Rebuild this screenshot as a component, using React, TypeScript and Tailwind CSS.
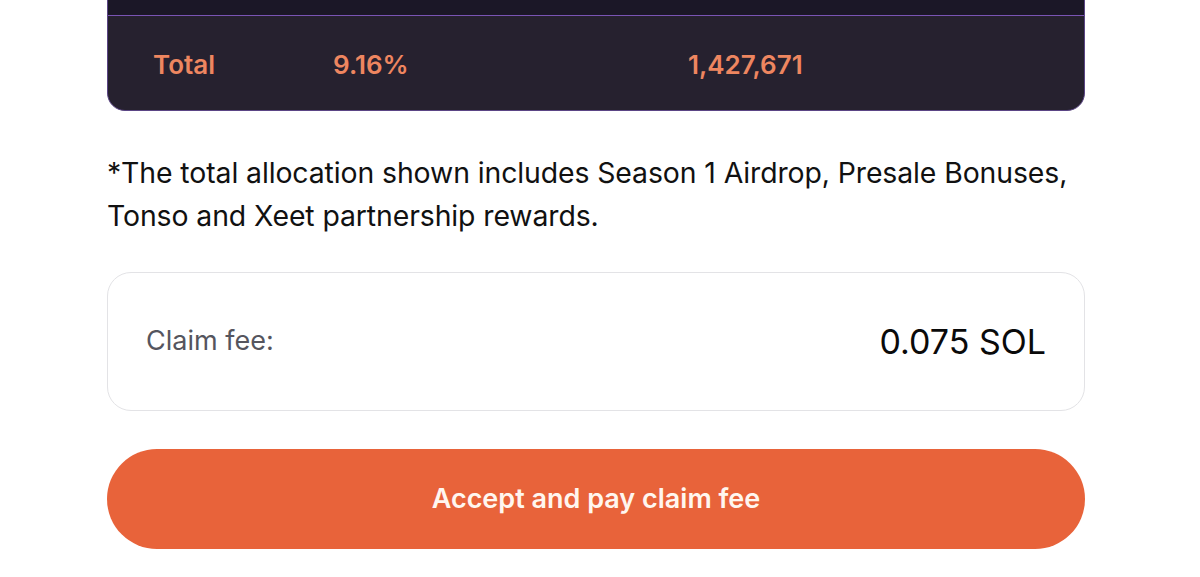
const totals = [
  { label: "Total", share: "9.16%", amount: "1,427,671" },
];

export default function App() {
  return (
    <div
      className="w-[1200px] h-[577px] overflow-hidden bg-white"
      style={{ fontFamily: "Inter, 'Noto Sans', sans-serif" }}
    >
      <div className="ml-[107px] w-[978px]">
        {/* Allocation table (top rows scrolled out of view) */}
        <div className="-mt-[60px] rounded-b-[18px] border border-[#5b4585] bg-[#26212f] overflow-hidden">
          <div className="h-[75px] bg-[#1b1727] border-b-[1.5px] border-[#7a54b4]" />
          {totals.map((row) => (
            <div
              key={row.label}
              className="flex items-center h-[94px] pt-[2px] text-[26px] font-semibold text-[#ee8660]"
            >
              <span className="pl-[45px] w-[225px]">{row.label}</span>
              <span className="w-[355px]">{row.share}</span>
              <span>{row.amount}</span>
            </div>
          ))}
        </div>

        {/* Note */}
        <p className="mt-[40px] text-[28.4px] leading-[43px] text-[#111111] tracking-[-0.1px]">
          *The total allocation shown includes Season 1 Airdrop, Presale Bonuses,
          Tonso and Xeet partnership rewards.
        </p>

        {/* Claim fee */}
        <div className="mt-[35px] h-[139px] rounded-[24px] border border-[#e3e3e6] flex items-center justify-between px-[38px]">
          <span className="text-[27px] text-[#55555e]">Claim fee:</span>
          <span className="text-[34px] text-[#0a0a0a]">0.075 SOL</span>
        </div>

        {/* Action */}
        <button className="mt-[38px] w-full h-[100px] rounded-full bg-[#e8633a] text-[#fff6ef] text-[27px] font-semibold">
          Accept and pay claim fee
        </button>
      </div>
    </div>
  );
}
